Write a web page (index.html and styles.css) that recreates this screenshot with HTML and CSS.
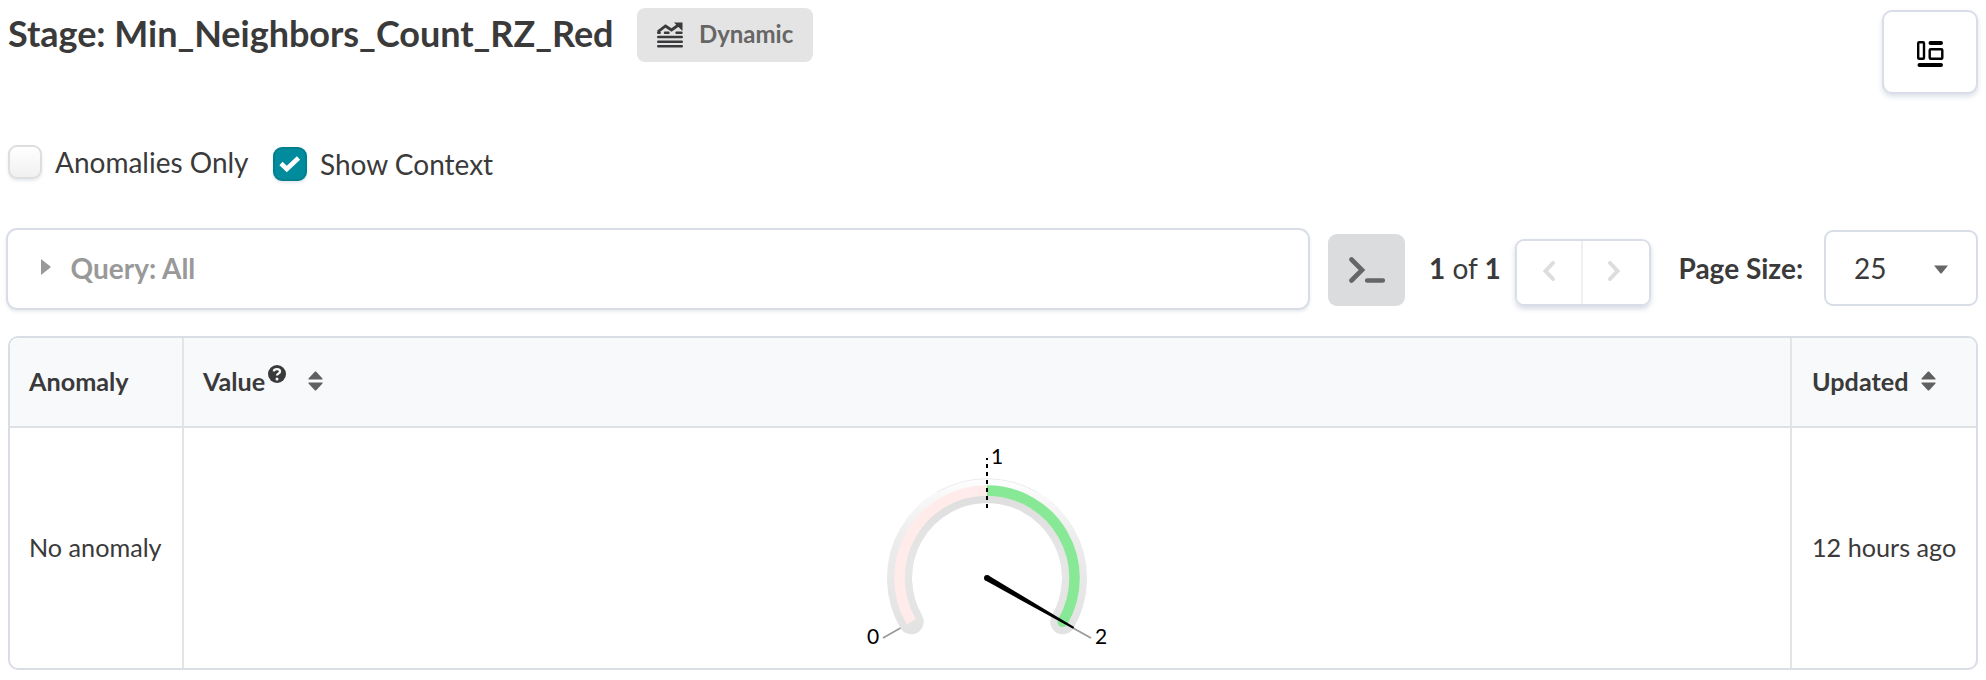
FILE: index.html
```html
<!DOCTYPE html>
<html lang="en">
<head>
<meta charset="utf-8">
<title>Stage: Min_Neighbors_Count_RZ_Red</title>
<link rel="stylesheet" href="styles.css">
</head>
<body>
<main class="page">
  <header class="header">
    <h1 class="title">Stage: Min_Neighbors_Count_RZ_Red</h1>
    <span class="badge">
      <svg class="badge-icon" width="26" height="26" viewBox="0 0 26 26" fill="none" stroke="#3a3a3c">
        <path d="M.8 9.800 8.500 4l6 4L21.500 3" stroke-width="2.800"/>
        <path d="M17 .5H25.500v8.500z" fill="#3a3a3c" stroke="none"/>
        <path d="M1.200 10.800h1.500M8 10.800h3.500M19.500 10.800h5M1.200 15h23.600M1.200 19.700h23.600M1.200 24.300h23.600" stroke-width="2.400" stroke-linecap="round"/>
      </svg>
      Dynamic
    </span>
    <button class="layout-button" aria-label="Layout">
      <svg width="28" height="28" viewBox="0 0 28 28" fill="none" stroke="#000" stroke-width="2.400">
        <rect x="2.200" y="2.200" width="5.800" height="16.600" rx="1"/>
        <rect x="13.700" y="9.200" width="12.600" height="9.600" rx="1"/>
        <path d="M14.500 3h10.500M3.500 25h21.500" stroke-width="4" stroke-linecap="round"/>
      </svg>
    </button>
  </header>

  <div class="filters">
    <label class="check"><span class="box"></span>Anomalies Only</label>
    <label class="check check-context"><span class="box box-on">
      <svg width="22" height="18" viewBox="0 0 22 18" fill="none" stroke="#fff" stroke-width="4.600"><path d="M2 8.500 7.800 14 19.500 3"/></svg>
    </span>Show Context</label>
  </div>

  <div class="toolbar">
    <div class="query">
      <svg width="10" height="16" viewBox="0 0 10 16"><path d="M0 0 9.500 7.500 9.500 8.500 0 16z" fill="#999"/></svg>
      <span>Query: All</span>
    </div>
    <button class="terminal" aria-label="Console">
      <svg width="36" height="26" viewBox="0 0 36 26" fill="none" stroke="#666" stroke-linecap="round"><path d="M2.500 2.500 13 13 2.500 23.500" stroke-width="4.600"/><path d="M18.200 23.500h15.600" stroke-width="4.600"/></svg>
    </button>
    <span class="count"><b>1</b> of <b>1</b></span>
    <div class="pager">
      <button aria-label="Previous"><svg width="12" height="20" viewBox="0 0 12 20"><path d="M10 2 2.500 10 10 18" /></svg></button>
      <button aria-label="Next"><svg width="12" height="20" viewBox="0 0 12 20"><path d="M2 2 9.500 10 2 18" /></svg></button>
    </div>
    <b class="size-label">Page Size:</b>
    <div class="select">25
      <svg width="14" height="9" viewBox="0 0 14 9"><path d="M0 .5h14L7.500 8.500h-1z" fill="#666"/></svg>
    </div>
  </div>

  <section class="table">
    <div class="cell head">Anomaly</div>
    <div class="cell head">Value
      <svg class="help" width="18" height="18" viewBox="0 0 18 18"><circle cx="9" cy="9" r="9" fill="#3a3a3a"/><path d="M5.800 6.400C6.200 3.300 12 3.400 12 6.500 12 8.700 9 8.500 9 10.500" fill="none" stroke="#f8f9fb" stroke-width="2.300"/><circle cx="9" cy="14" r="1.500" fill="#f8f9fb"/></svg>
      <svg class="sort" width="15" height="20" viewBox="0 0 15 20"><path d="M7 .5h1L14.500 7.500v1H.5v-1zM.5 11.500h14v1L8 19.500H7L.5 12.500z"/></svg>
    </div>
    <div class="cell head">Updated
      <svg class="sort sort-updated" width="15" height="20" viewBox="0 0 15 20"><path d="M7 .5h1L14.500 7.500v1H.5v-1zM.5 11.500h14v1L8 19.500H7L.5 12.500z"/></svg>
    </div>
    <div class="cell">No anomaly</div>
    <div class="cell gauge-cell">
      <svg class="gauge" width="280" height="240" viewBox="0 0 280 240">
        <defs>
          <linearGradient id="rim" x1="0" y1="48" x2="0" y2="204" gradientUnits="userSpaceOnUse">
            <stop offset="0" stop-color="#fff"/><stop offset=".1" stop-color="#f9f9f9"/><stop offset=".4" stop-color="#ececec"/><stop offset="1" stop-color="#e2e2e2"/>
          </linearGradient>
          <linearGradient id="inner" x1="0" y1="60" x2="0" y2="204" gradientUnits="userSpaceOnUse">
            <stop offset="0" stop-color="#dedede"/><stop offset=".5" stop-color="#e6e6e6"/><stop offset="1" stop-color="#e3e3e3"/>
          </linearGradient>
        </defs>
        <path d="M61.200 191.800A87.500 87.500 0 1 1 212.800 191.800" fill="none" stroke="url(#rim)" stroke-width="25" stroke-linecap="round"/>
        <path d="M67.700 188A80 80 0 1 1 206.300 188" fill="none" stroke="url(#inner)" stroke-width="10"/>
        <path d="M87 62.200A99.500 99.500 0 0 1 187 62.200" fill="none" stroke="#e9e9e9" stroke-width=".8"/>
        <path d="M61.200 191.800A87.500 87.500 0 0 1 137 60.500" fill="none" stroke="#ffecea" stroke-width="10.500"/>
        <path d="M137 60.500A87.500 87.500 0 0 1 212.800 191.800" fill="none" stroke="#87e896" stroke-width="10.500"/>
        <circle cx="212.600" cy="191.800" r="5.200" fill="#87e896"/>
        <path d="M33 208 50.500 198M223 198l18 10" stroke="#999" stroke-width="1.700"/>
        <path d="M137 28v50" stroke="#000" stroke-width="2" stroke-dasharray="4 4" stroke-dashoffset="2"/>
        <path d="M135.500 150.600 223 198.800 224.200 197 138.500 145.400z" fill="#000"/>
        <circle cx="137" cy="148" r="3" fill="#000"/>
        <text x="17" y="214">0</text><text x="141" y="34">1</text><text x="245" y="214">2</text>
      </svg>
    </div>
    <div class="cell">12 hours ago</div>
  </section>
</main>
</body>
</html>
```
FILE: styles.css
```css
* { box-sizing: border-box; }
body { margin: 0; background: #fff; color: #3a3a3a; font-family: Lato, "Liberation Sans", sans-serif; }
button { padding: 0; font: inherit; background: #fff; }
svg { display: block; flex: none; }
.page { width: 1986px; height: 680px; padding: 8px 8px 10px 6px; display: flex; flex-direction: column; overflow: hidden; }
.header { height: 136px; display: flex; align-items: flex-start; padding-left: 2px; }
.title { margin: 0; width: 629px; font-size: 36px; line-height: 44px; font-weight: 700; padding-top: 3px; white-space: nowrap; letter-spacing: -.03px; }
.badge { width: 176px; height: 54px; border-radius: 8px; background: #e4e4e4; color: #666; font-size: 24px; font-weight: 700; line-height: 29px; display: flex; padding: 11px 0 0 20px; gap: 16px; }
.badge-icon { margin-top: 3px; }
.layout-button { width: 96px; height: 84px; margin: 2px 0 0 auto; border: 2px solid #d8dde8; border-radius: 10px; box-shadow: 0 3px 5px rgba(90, 110, 150, .2); display: grid; place-items: center; }
.layout-button svg { margin-top: 3px; }
.filters { height: 84px; display: flex; padding-left: 2px; align-items: flex-start; }
.check { width: 265px; display: flex; font-size: 28px; line-height: 34px; gap: 13px; white-space: nowrap; padding-top: 1px; }
.check-context { padding-top: 3px; }
.box { width: 34px; height: 34px; flex: none; border: 2px solid #dedede; border-radius: 9px; background: linear-gradient(#fff, #f0f0f0); box-shadow: 0 2px 3px rgba(80, 110, 150, .15); display: grid; place-items: center; }
.box-on { background: #008c9c; border-color: #007f8e; }
.toolbar { height: 82px; display: flex; align-items: flex-start; font-size: 28px; line-height: 34px; white-space: nowrap; }
.query { width: 1304px; height: 82px; border: 2px solid #d9dde5; border-radius: 11px; box-shadow: 0 2px 3px rgba(90, 110, 150, .13); color: #999; font-weight: 700; display: flex; padding: 21px 0 0 33px; gap: 19.5px; }
.query svg { margin-top: 8px; }
.terminal { width: 77px; height: 72px; margin: 6px 0 0 18px; border: 0; border-radius: 9px; background: #dbdcde; display: grid; place-items: center; }
.terminal svg { margin-top: -1px; }
.count { width: 86px; margin: 23px 0 0 24px; }
.pager { width: 136px; height: 67px; margin-top: 11px; border: 2px solid #d9dde7; border-radius: 9px; box-shadow: 0 3px 5px rgba(90, 110, 150, .25); display: grid; grid-template-columns: 64px 68px; overflow: hidden; }
.pager button { border: 0; display: grid; place-items: center; padding-bottom: 3px; }
.pager button + button { border-left: 2px solid #f0f0f1; padding-right: 4px; }
.pager path { fill: none; stroke: #ddd; stroke-width: 4; stroke-linecap: round; }
.size-label { width: 145.500px; margin: 23px 0 0 27.500px; }
.select { width: 154px; height: 76px; margin-top: 2px; border: 2px solid #d8dde6; border-radius: 9px; display: flex; justify-content: space-between; padding: 19px 28px 0 28px; }
.select svg { margin-top: 14px; }
.table { width: 1970px; height: 334px; margin: 26px 0 0 2px; border: 2px solid #d9dde4; border-radius: 10px; display: grid; grid-template-columns: 174px 1608px 184px; grid-template-rows: 90px 240px; overflow: hidden; }
.cell { display: flex; align-items: center; padding: 0 0 2px 19px; font-size: 25.2px; white-space: nowrap; border-right: 2px solid #e2e4e6; }
.cell:nth-child(3n) { border-right: 0; padding-left: 20px; }
.head { font-weight: 700; background: #f8f9fb; border-bottom: 2px solid #dee1e5; }
.help { margin: -15px 0 0 3px; }
.sort { margin-left: 22px; fill: #606060; }
.sort-updated { margin-left: 12px; }
.gauge-cell { padding: 4px 0 0 666px; }
.gauge text { font-size: 21px; fill: #000; }
```
